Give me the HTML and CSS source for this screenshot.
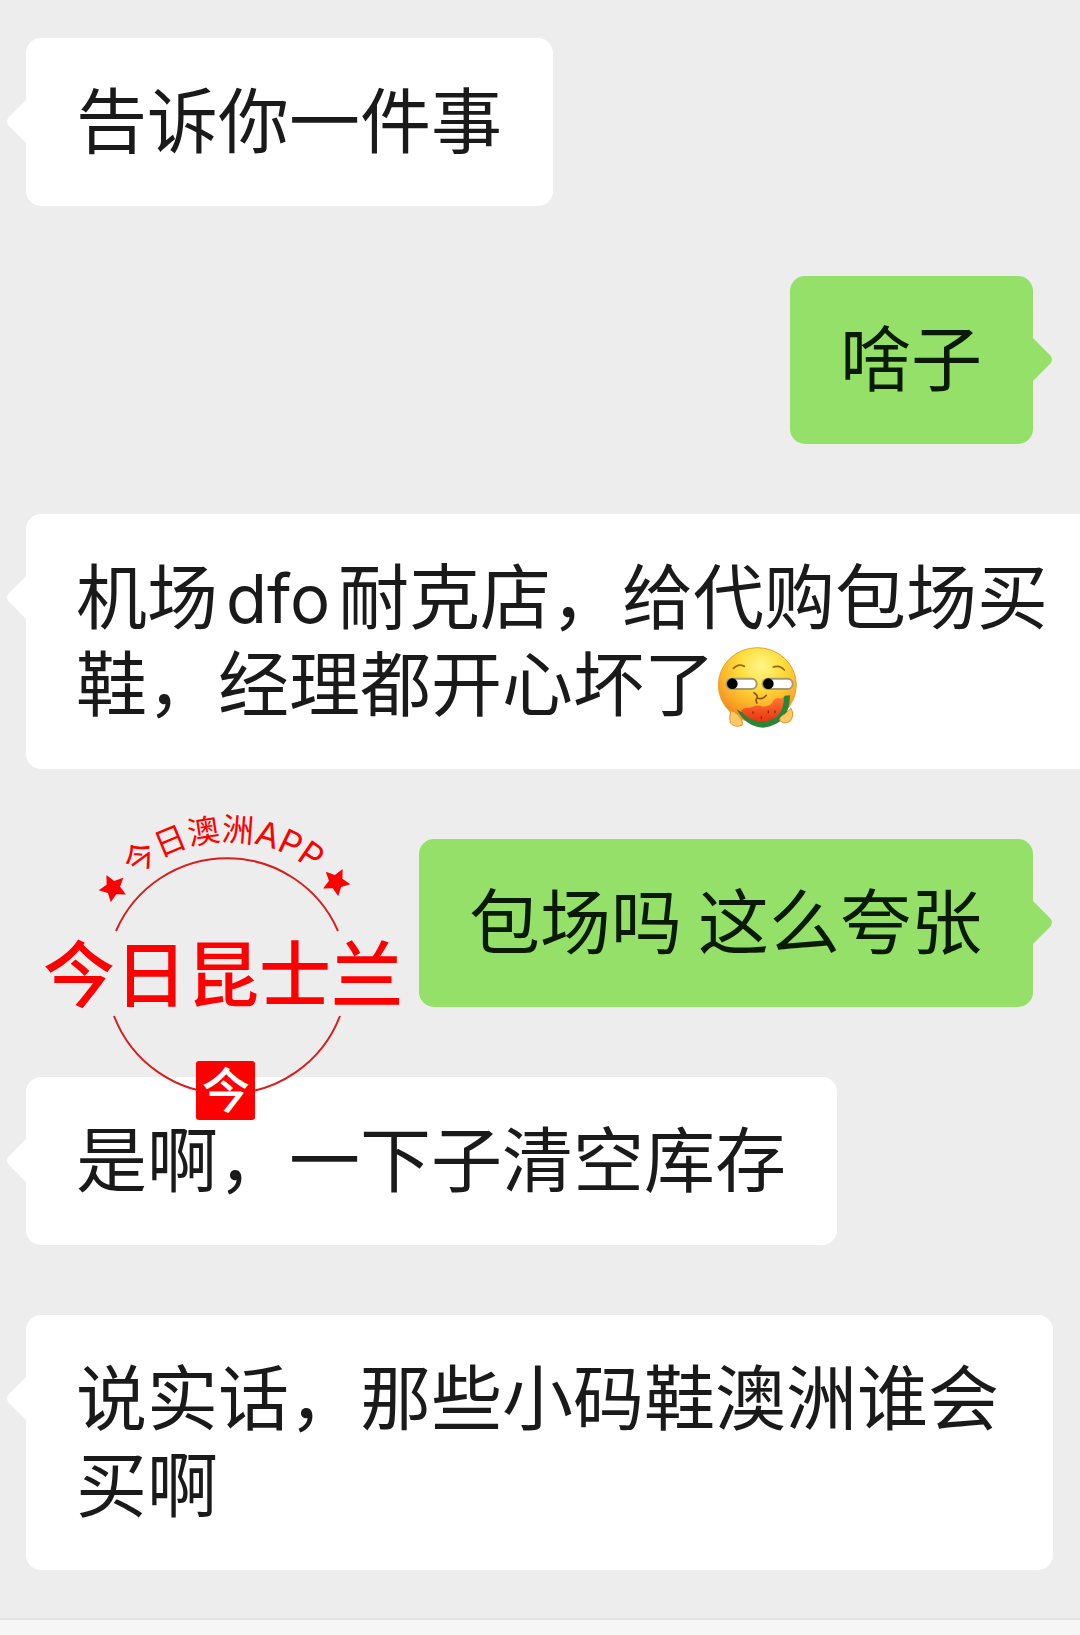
FILE: index.html
```
<!DOCTYPE html>
<html lang="zh-CN">
  <head>
    <title>聊天记录</title>
    <meta charset="UTF-8">
    <meta name="viewport" content="width=device-width, initial-scale=1">
    <link rel="stylesheet" href="styles.css">
  </head>

  <body>
    <main class="chat">
      <p class="bubble left">告诉你一件事</p>
      <p class="bubble right">啥子</p>
      <p class="bubble left wide">机场<span class="latin">dfo</span>耐克店，给代购包场买鞋，经理都开心坏了<svg class="emoji" viewBox="60 45 240 243" role="img" aria-label="吃瓜">
          <defs>
            <radialGradient id="face" cx="0.55" cy="0.25" r="0.8">
              <stop offset="0" stop-color="#fff58a"/>
              <stop offset="0.35" stop-color="#ffdf3c"/>
              <stop offset="0.65" stop-color="#fdb42b"/>
              <stop offset="1" stop-color="#ee7a18"/>
            </radialGradient>
            <linearGradient id="melon" x1="0" y1="0" x2="0" y2="1">
              <stop offset="0" stop-color="#ff7a35"/>
              <stop offset="1" stop-color="#ea3410"/>
            </linearGradient>
          </defs>
          <ellipse cx="178" cy="159" rx="117" ry="112" fill="url(#face)" stroke="#e9a02c" stroke-width="3"/>
          <path d="M106 109q15-16 33-6M226 105q19-7 33 9" fill="none" stroke="#9a6413" stroke-width="5" stroke-linecap="round"/>
          <rect x="86" y="140" width="90" height="31" rx="15" fill="#fff" stroke="#a29a75" stroke-width="6"/>
          <rect x="194" y="140" width="90" height="31" rx="15" fill="#fff" stroke="#a29a75" stroke-width="6"/>
          <circle cx="103" cy="155" r="16"/>
          <circle cx="211" cy="155" r="16"/>
          <path d="M168 182q13 8 9 17q-6 4 0 14M177 198q17 6 28-8" fill="none" stroke="#8a5210" stroke-width="5" stroke-linecap="round"/>
          <path d="M116 232Q145 286 196 287Q276 278 276 190L260 191Q240 250 130 240z" fill="#2c8536"/>
          <path d="M129 237Q135 226 157 227Q178 216 195 224Q218 224 225 208Q234 193 247 200L258 194Q258 262 195 269Q150 267 129 237z" fill="url(#melon)"/>
          <path d="M165 240v4M211 237v5M231 237v5M190 255v4" stroke="#8c2410" stroke-width="4" stroke-linecap="round"/>
          <path d="M99 236Q92 258 97 273Q112 289 133 279Q136 263 121 250Q110 237 99 236z" fill="#ffc965" stroke="#e3942d" stroke-width="3"/>
          <path d="M279 229Q290 249 277 267Q259 279 246 266Q242 256 260 247z" fill="#ffc965" stroke="#e3942d" stroke-width="3"/>
        </svg></p>
      <p class="bubble right">包场吗 这么夸张</p>
      <p class="bubble left">是啊，一下子清空库存</p>
      <p class="bubble left">说实话，那些小码鞋澳洲谁会买啊</p>

      <!-- watermark stamp, lies over the messages -->
      <svg class="stamp" viewBox="0 0 390 340">
        <defs>
          <path id="arc" d="M61 177A136 136 0 0 1 333 177"/>
          <path id="star" d="M0-14.5L4.2-5.8L13.8-4.5L6.8 2.2L8.5 11.7L0 7.1L-8.5 11.7L-6.8 2.2L-13.8-4.5L-4.2-5.8z"/>
        </defs>
        <path class="ring" d="M86 131A121 121 0 0 1 308 131M84 216A121 121 0 0 0 310 216"/>
        <text class="stamp-arc"><textPath href="#arc" startOffset="49%">今日澳洲<tspan class="stamp-latin">APP</tspan></textPath></text>
        <use href="#star" transform="translate(83 88) rotate(-27)"/>
        <use href="#star" transform="translate(306 82) rotate(27)"/>
        <text class="stamp-name" x="193" y="201">今日昆士兰</text>
        <rect x="166" y="261" width="59" height="59" rx="3"/>
        <text class="stamp-mark" x="196" y="308">今</text>
      </svg>
    </main>
    <footer class="toolbar"></footer>
  </body>
</html>
```
FILE: styles.css
```
* {box-sizing: border-box;}
body {
	display: flex;
	flex-direction: column;
	min-height: 100vh;
	margin: 0;
	overflow-x: hidden;
	background: #ededed;
	color: #1a1a1a;
	font-family: "Noto Sans CJK SC", sans-serif;
}
.chat {
	position: relative;
	display: flex;
	flex: 1;
	flex-direction: column;
	align-items: flex-start;
	gap: 70px;
	padding: 38px 27px 48px 26px;
	overflow: hidden;
}
.bubble {
	position: relative;
	margin: 0;
	padding: 35px 51px 46px 50px;
	border-radius: 15px;
	background: #fff;
	font-size: 71px;
	line-height: 87px;
}
.right {
	align-self: flex-end;
	margin-right: 20px;
	background: #95e068;
	color: #0a1a04;
}
/* Runs off the right edge of the window */
.wide {
	align-self: stretch;
	margin-right: -27px;
	padding-right: 30px;
	border-radius: 15px 0 0 15px;
}
/* Speech arrow: a turned square behind the edge */
.bubble::before {
	content: "";
	position: absolute;
	top: 68px;
	width: 31px;
	height: 31px;
	background: inherit;
	transform: rotate(45deg);
}
.left::before {
	left: -15px;
	border-radius: 0 0 0 6px;
}
.right::before {
	right: -15px;
	border-radius: 0 6px 0 0;
}
.latin {
	margin: 0 8px;
	font-family: Inter, sans-serif;
	font-size: 67px;
	line-height: 60px;
}
.emoji {
	width: 80px;
	height: 81px;
	margin: -10px 3px;
	vertical-align: -8px;
}
.stamp {
	position: absolute;
	top: 800px;
	left: 30px;
	width: 390px;
	height: 340px;
	fill: #f00;
}
.ring {
	fill: none;
	stroke: #d81e1e;
	stroke-width: 2px;
}
.stamp-arc, .stamp-name, .stamp-mark {text-anchor: middle;}
.stamp-arc {font-size: 32px;}
.stamp-latin {
	font-family: Inter, sans-serif;
	font-size: 34px;
}
.stamp-name {
	font-size: 72px;
	font-weight: 500;
}
.stamp-mark {
	fill: #fff;
	font-size: 48px;
	font-weight: 500;
}
.toolbar {
	height: 17px;
	border-top: 2px solid #e4e4e4;
	background: #f6f6f6;
}
```
